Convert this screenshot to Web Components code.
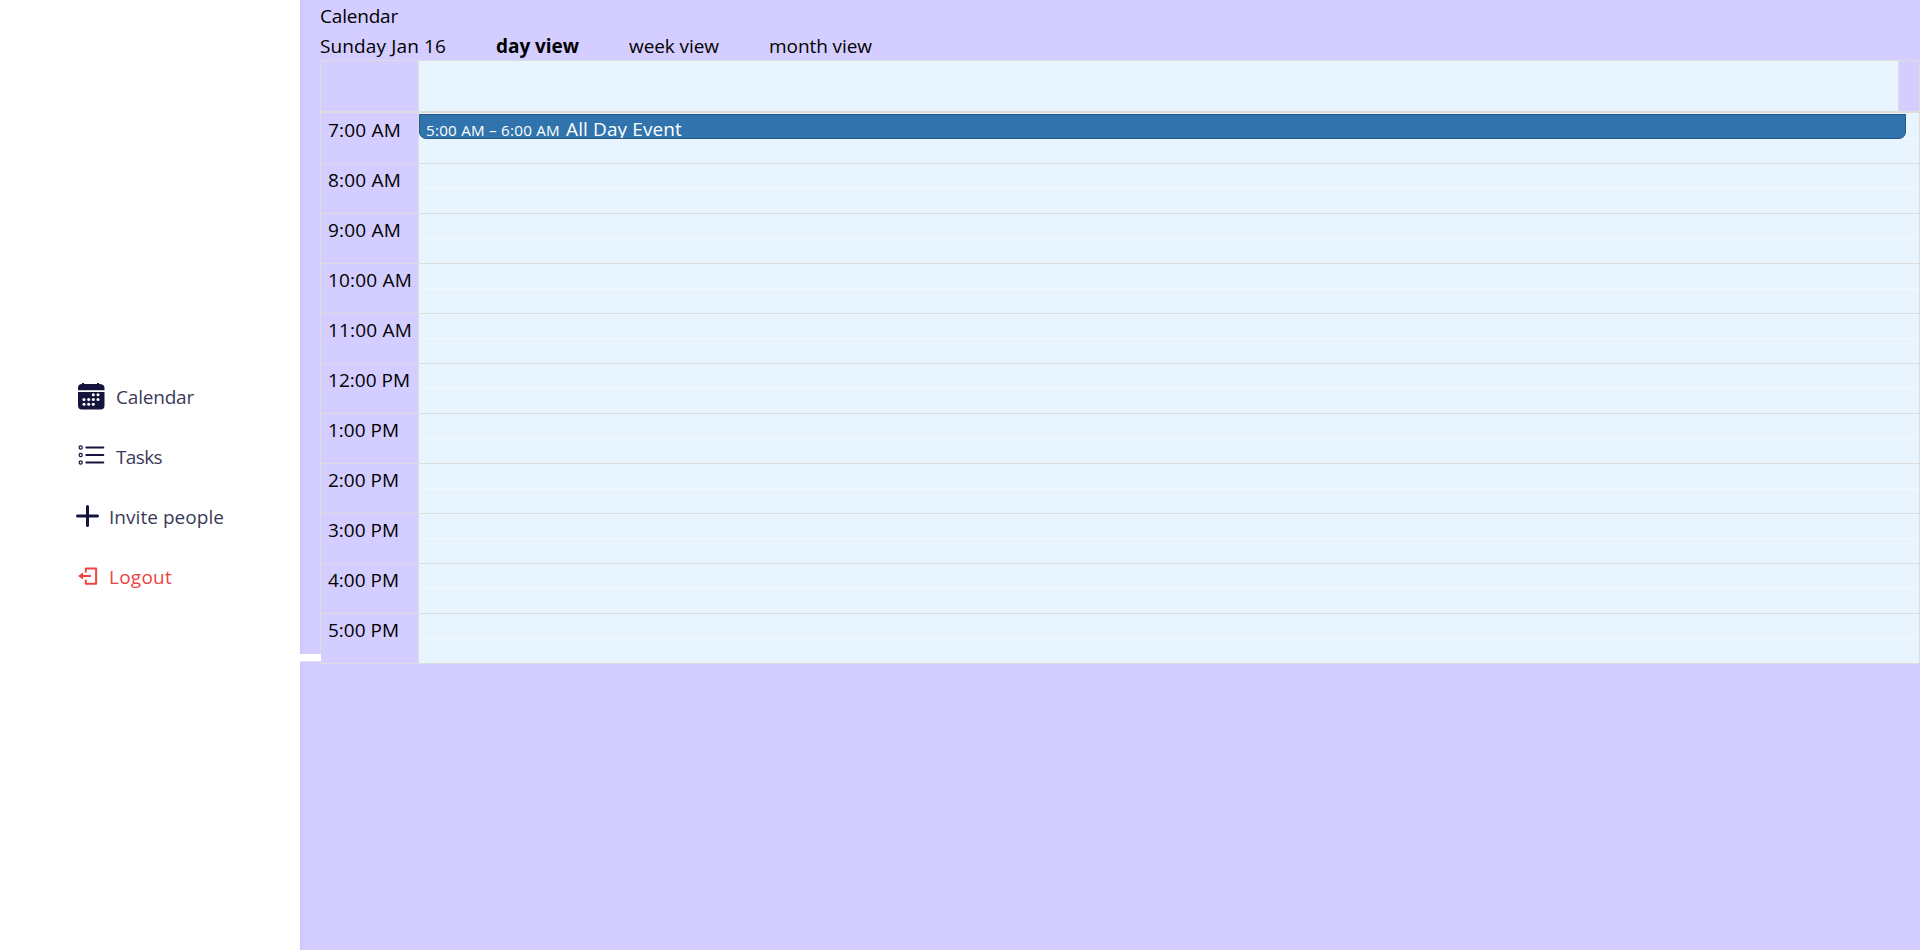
<!DOCTYPE html>
<html lang="en">
<head>
  <meta charset="UTF-8">
  <meta name="viewport" content="width=device-width, initial-scale=1.0">
  <title>Calendar</title>
  <style>
    body {
      --navy: #15143d;
      --red: #ee4444;
      --lilac: #d4cdff;
      --sky: #e8f5ff;
      --line: #dddddd;
      margin: 0;
      height: 100vh;
      overflow: hidden;
      background: white;
      color: black;
      font: 19px/30px 'Open Sans', 'Noto Sans', sans-serif;
    }
  </style>
</head>
<body>
  <calendar-app>
    <side-nav slot="side">
      <nav-item icon="calendar" width="78">Calendar</nav-item>
      <nav-item icon="tasks" width="46">Tasks</nav-item>
      <nav-item icon="plus" width="115">Invite people</nav-item>
      <nav-item icon="logout" width="63" class="danger">Logout</nav-item>
    </side-nav>
    <view-bar></view-bar>
    <day-grid></day-grid>
  </calendar-app>

  <script>
    // label with a fixed advance width, the tracking absorbs the difference
    customElements.define('fit-label', class extends HTMLElement {
      constructor() {
        super();
        this.attachShadow({ mode: 'open' });
        this.shadowRoot.innerHTML = `
          <style>
            :host {
              display: inline-block;
              white-space: nowrap;
            }
          </style>
          <span><slot></slot></span>
        `;
      }

      connectedCallback() {
        const span = this.shadowRoot.querySelector('span');
        const width = Number(this.getAttribute('width'));
        const diff = width - span.getBoundingClientRect().width;
        span.style.letterSpacing = diff / this.textContent.length + 'px';
        this.style.width = width + 'px';
      }
    });

    customElements.define('calendar-app', class extends HTMLElement {
      constructor() {
        super();
        this.attachShadow({ mode: 'open' });
        this.shadowRoot.innerHTML = `
          <style>
            :host {
              display: grid;
              grid-template-columns: 300px 1fr;
              height: 100vh;
            }

            main {
              background: linear-gradient(to right, #cbc4f5, var(--lilac) 4px);
              display: grid;
              grid-template-columns: 20px 1fr;
              grid-template-rows: 654px 8px 1fr;
            }

            .notch {
              grid-row: 2;
              z-index: 1;
              background: white;
              margin-right: -1px;
              border-bottom: 1px solid #e3deff;
            }

            .content {
              grid-column: 2;
              grid-row: 1 / -1;
            }
          </style>
          <slot name="side"></slot>
          <main>
            <div class="notch"></div>
            <div class="content"><slot></slot></div>
          </main>
        `;
      }
    });

    customElements.define('side-nav', class extends HTMLElement {
      constructor() {
        super();
        this.attachShadow({ mode: 'open' });
        this.shadowRoot.innerHTML = `
          <style>
            :host {
              display: flex;
              flex-direction: column;
              gap: 30px;
              padding: 382px 0 0 76px;
            }
          </style>
          <slot></slot>
        `;
      }
    });

    const icons = {
      calendar: `
        <svg width="40" height="30" viewBox="0 0 40 30">
          <path fill="currentColor" d="M2 8.3V6q0-4 4-4V1h2v1h13V1h2v1q5.500 0 5.500 4v2.300zM2 10h26.500v13.500q0 4-4 4H6q-4 0-4-4z"/>
          <g fill="white">
            <circle cx="17.3" cy="12.700" r="1.5"/><circle cx="22" cy="12.700" r="1.5"/>
            <circle cx="8" cy="17.500" r="1.5"/><circle cx="12.7" cy="17.500" r="1.5"/>
            <circle cx="17.3" cy="17.500" r="1.5"/><circle cx="22" cy="17.500" r="1.5"/>
            <circle cx="8" cy="22.200" r="1.5"/><circle cx="12.7" cy="22.200" r="1.5"/>
            <circle cx="17.3" cy="22.200" r="1.5"/>
          </g>
        </svg>`,
      tasks: `
        <svg width="40" height="30" viewBox="0 0 40 30" fill="none" stroke="currentColor">
          <path stroke-width="2" stroke-linecap="round" d="M10.3 5.5h17M10.3 13h17M10.3 20.5h17"/>
          <circle cx="4.7" cy="5.5" r="1.6" stroke-width="1.2"/>
          <circle cx="4.7" cy="13" r="1.6" stroke-width="1.2"/>
          <circle cx="4.7" cy="20.5" r="1.6" stroke-width="1.2"/>
        </svg>`,
      plus: `
        <svg width="33" height="30" viewBox="0 0 33 30" fill="none" stroke="currentColor">
          <path stroke-width="3" stroke-linecap="round" d="M1.5 14H21.5M11.5 4.500V23.500"/>
        </svg>`,
      logout: `
        <svg width="33" height="30" viewBox="0 0 33 30" fill="none" stroke="currentColor">
          <path stroke-width="2" stroke-linejoin="round" d="M9.8 10.5V6.6h10.3v15.2H9.8v-4M5 14h10"/>
          <path fill="currentColor" stroke="none" d="M2 14l5-3.5v7z"/>
        </svg>`
    };

    customElements.define('nav-item', class extends HTMLElement {
      constructor() {
        super();
        this.attachShadow({ mode: 'open' });
        this.shadowRoot.innerHTML = `
          <style>
            :host {
              display: flex;
              height: 30px;
              color: var(--navy);
            }

            :host(.danger) {
              color: var(--red);
            }

            svg {
              flex: none;
            }

            fit-label {
              opacity: .85;
            }

            :host(.danger) fit-label {
              opacity: 1;
            }
          </style>
          ${icons[this.getAttribute('icon')]}
          <fit-label width="${this.getAttribute('width')}">${this.textContent}</fit-label>
        `;
      }
    });

    customElements.define('view-bar', class extends HTMLElement {
      constructor() {
        super();
        this.attachShadow({ mode: 'open' });
        this.shadowRoot.innerHTML = `
          <style>
            :host {
              display: block;
              height: 60px;
              margin-top: 1px;
              margin-bottom: -1px;
            }

            .views {
              display: flex;
              gap: 50px;
            }

            fit-label {
              display: block;
            }

            .active {
              font-weight: bold;
            }
          </style>
          <fit-label width="78">Calendar</fit-label>
          <div class="views">
            <fit-label width="126">Sunday Jan 16</fit-label>
            <fit-label class="active" width="83">day view</fit-label>
            <fit-label width="90">week view</fit-label>
            <fit-label width="103">month view</fit-label>
          </div>
        `;
      }
    });

    customElements.define('day-event', class extends HTMLElement {
      constructor() {
        super();
        this.attachShadow({ mode: 'open' });
        this.shadowRoot.innerHTML = `
          <style>
            :host {
              display: flex;
              box-sizing: border-box;
              height: 25px;
              padding-left: 6px;
              overflow: hidden;
              color: white;
              background: #3174ad;
              border: 1px solid #265985;
              border-radius: 0 0 7px 7px;
            }

            fit-label {
              line-height: 29px;
            }

            .time {
              font-size: 15.2px;
              line-height: 31px;
              margin-right: 6px;
            }
          </style>
          <fit-label class="time" width="134">5:00 AM – 6:00 AM</fit-label>
          <fit-label width="116">All Day Event</fit-label>
        `;
      }
    });

    customElements.define('day-grid', class extends HTMLElement {
      constructor() {
        super();
        this.attachShadow({ mode: 'open' });

        const hours = ['7:00 AM', '8:00 AM', '9:00 AM', '10:00 AM', '11:00 AM', '12:00 PM',
          '1:00 PM', '2:00 PM', '3:00 PM', '4:00 PM', '5:00 PM'];
        const rows = hours.map((hour) => {
          const width = (hour.length > 7 ? 84 : 73) - (hour.endsWith('PM') ? 2 : 0);
          return `<div class="hour"><fit-label width="${width}">${hour}</fit-label></div>`;
        }).join('');

        this.shadowRoot.innerHTML = `
          <style>
            :host {
              display: block;
            }

            .header, .body {
              display: grid;
              grid-template-columns: 97px 1fr;
              border: 1px solid var(--line);
            }

            .header {
              height: 50px;
              grid-template-columns: 97px 1fr 20px;
            }

            .allday {
              background: var(--sky);
              border: solid var(--line);
              border-width: 0 1px;
            }

            .hour {
              box-sizing: border-box;
              height: 50px;
              padding: 1px 0 0 7px;
              border-bottom: 1px solid var(--line);
            }

            .hour:first-child {
              padding-top: 2px;
              height: 51px;
            }

            .hour:last-child {
              border: none;
              height: 49px;
            }

            .slots {
              background: var(--sky);
              border-left: 1px solid var(--line);
              position: relative;
            }

            .slot {
              box-sizing: border-box;
              height: 50px;
              border-bottom: 1px solid var(--line);
              background: linear-gradient(#f5f7f9, #f5f7f9) 0 24px / 100% 1px no-repeat;
            }

            .slot:first-child {
              height: 51px;
              background-position: 0 25px;
            }

            .slot:last-of-type {
              border: none;
              height: 49px;
            }

            /* events lie over the slots */
            day-event {
              position: absolute;
              top: 1px;
              left: 0;
              right: 13px;
            }
          </style>
          <div class="header">
            <div></div>
            <div class="allday"></div>
          </div>
          <div class="body">
            <div>${rows}</div>
            <div class="slots">
              ${'<div class="slot"></div>'.repeat(hours.length)}
              <day-event></day-event>
            </div>
          </div>
        `;
      }
    });
  </script>
</body>
</html>
